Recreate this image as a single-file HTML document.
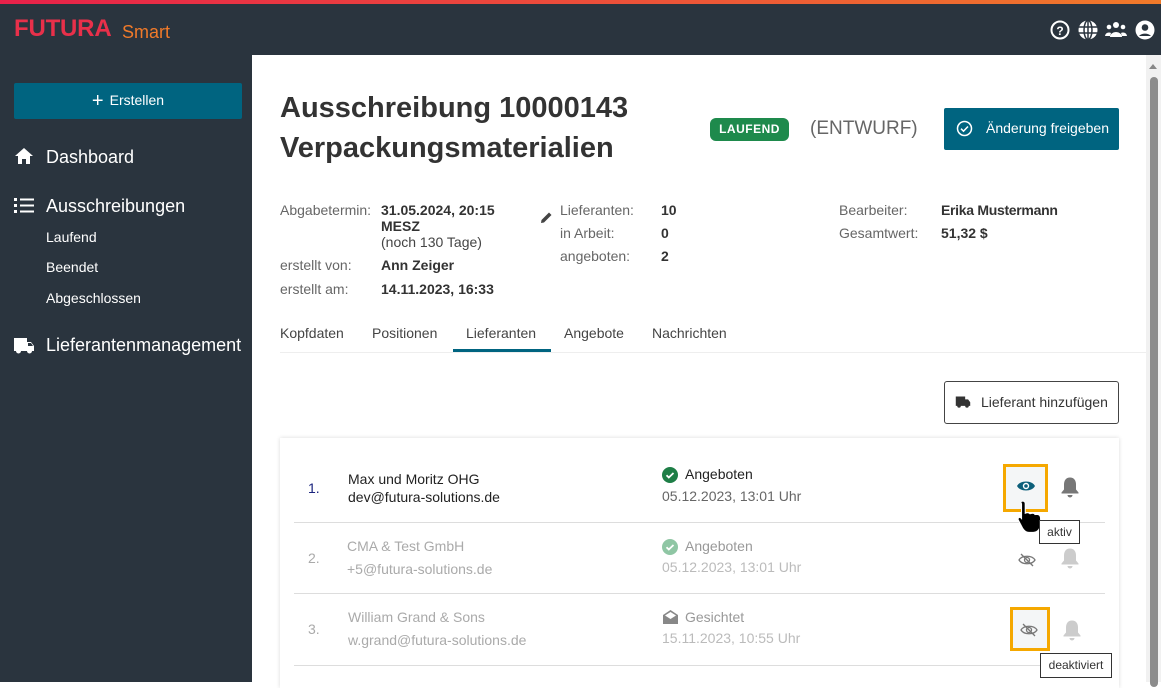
<!DOCTYPE html>
<html><head><meta charset="utf-8"><style>
*{box-sizing:border-box;margin:0;padding:0}
body{width:1161px;height:682px;overflow:hidden;font-family:"Liberation Sans",sans-serif;background:#fff;position:relative;color:#333}
.abs{position:absolute}
.top{left:0;top:0;width:1161px;height:55px;background:#2a343e}
.grad{left:0;top:0;width:1161px;height:4px;background:linear-gradient(90deg,#e8214a,#f07a2a)}
.side{left:0;top:55px;width:252px;height:627px;background:#2a343e}
.w{color:#fff}
.lbl{color:#666;font-size:14px}
.val{color:#333;font-size:14px;font-weight:bold}
.g{color:#aaa}
.sep{left:294px;width:811px;height:1px;background:#ddd}
</style></head><body>
<div class="abs top"></div><div class="abs grad"></div>
<div class="abs" style="left:14px;top:15px;font-size:24px;font-weight:bold;color:#e8304a;letter-spacing:-0.2px">FUTURA</div>
<div class="abs" style="left:122px;top:22px;font-size:18px;color:#f07a2a">Smart</div>
<svg class="abs" style="left:1050px;top:20px" width="110" height="22" viewBox="0 0 110 22">
<circle cx="10" cy="10" r="8.5" fill="none" stroke="#fff" stroke-width="2"/><text x="10" y="15" font-size="12" font-weight="bold" fill="#fff" text-anchor="middle" font-family="Liberation Sans">?</text>
<circle cx="38" cy="10" r="9.5" fill="#fff"/><path d="M28.5 7h19M28.5 13h19M38 .5v19" stroke="#2a343e" stroke-width="1.5"/><ellipse cx="38" cy="10" rx="4" ry="9.5" fill="none" stroke="#2a343e" stroke-width="1.5"/>
<circle cx="66" cy="5" r="3" fill="#fff"/><circle cx="59" cy="7" r="2.3" fill="#fff"/><circle cx="73" cy="7" r="2.3" fill="#fff"/><path d="M60 17a6 5 0 0 1 12 0zM55 16a4 4 0 0 1 6-3l-1 3zM77 16a4 4 0 0 0-6-3l1 3z" fill="#fff"/>
<circle cx="95" cy="10" r="9.5" fill="#fff"/><circle cx="95" cy="7.5" r="3.3" fill="#2a343e"/><path d="M89 16a7 5 0 0 1 12 0" fill="#2a343e"/>
</svg>
<div class="abs side"></div>
<div class="abs" style="left:14px;top:83px;width:228px;height:36px;background:#006480;border-radius:2px;color:#fff;font-size:14px;text-align:center;line-height:34px"><span style="font-size:20px;vertical-align:-2px;margin-right:6px">+</span>Erstellen</div>
<svg class="abs" style="left:14px;top:147px" width="20" height="18" viewBox="0 0 20 18"><path d="M10 1L1 9h3v8h4v-5h4v5h4V9h3z" fill="#fff"/></svg>
<div class="abs w" style="left:46px;top:147px;font-size:18px">Dashboard</div>
<svg class="abs" style="left:14px;top:197px" width="20" height="18" viewBox="0 0 20 18"><g fill="#fff"><rect x="0" y="1" width="3" height="3"/><rect x="0" y="7" width="3" height="3"/><rect x="0" y="13" width="3" height="3"/><rect x="6" y="1.5" width="14" height="2"/><rect x="6" y="7.5" width="14" height="2"/><rect x="6" y="13.5" width="14" height="2"/></g></svg>
<div class="abs w" style="left:46px;top:196px;font-size:18px">Ausschreibungen</div>
<div class="abs w" style="left:46px;top:229px;font-size:14px">Laufend</div>
<div class="abs w" style="left:46px;top:259px;font-size:14px">Beendet</div>
<div class="abs w" style="left:46px;top:290px;font-size:14px">Abgeschlossen</div>
<svg class="abs" style="left:13px;top:336px" width="22" height="18" viewBox="0 0 22 18"><path d="M1 2h13v4h4l3 4v5h-2a2.5 2.5 0 0 1-5 0H8a2.5 2.5 0 0 1-5 0H1z" fill="#fff"/><path d="M15 7h3l2 3h-5z" fill="#2a343e"/></svg>
<div class="abs w" style="left:46px;top:335px;font-size:18px">Lieferantenmanagement</div>
<div class="abs" style="left:1146px;top:55px;width:15px;height:627px;background:#f1f1f1"></div>
<div class="abs" style="left:1149px;top:64px;width:0;height:0;border-left:4px solid transparent;border-right:4px solid transparent;border-bottom:5px solid #888"></div>
<div class="abs" style="left:1150px;top:77px;width:8px;height:610px;background:#8c8c8c;border-radius:4px"></div>
<div class="abs" style="left:280px;top:88px;font-size:29px;font-weight:bold;color:#333;line-height:40px">Ausschreibung 10000143<br>Verpackungsmaterialien</div>
<div class="abs" style="left:710px;top:118px;width:79px;height:23px;background:#1e8a4c;border-radius:6px;color:#fff;font-size:12px;font-weight:bold;text-align:center;line-height:23px;letter-spacing:0.5px">LAUFEND</div>
<div class="abs" style="left:810px;top:118px;font-size:19px;color:#666">(ENTWURF)</div>
<div class="abs" style="left:944px;top:108px;width:175px;height:42px;background:#006480;border-radius:2px;color:#fff;font-size:14px;line-height:40px;padding-left:42px">Änderung freigeben</div>
<svg class="abs" style="left:956px;top:120px" width="17" height="17" viewBox="0 0 17 17"><circle cx="8.5" cy="8.5" r="7" fill="none" stroke="#fff" stroke-width="1.5"/><path d="M5 8.7l2.5 2.5L12 6.5" fill="none" stroke="#fff" stroke-width="1.5"/></svg>
<div class="abs lbl" style="left:280px;top:202px">Abgabetermin:</div>
<div class="abs val" style="left:381px;top:202px;line-height:16px">31.05.2024, 20:15<br>MESZ<br><span style="font-weight:normal;color:#444">(noch 130 Tage)</span></div>
<div class="abs lbl" style="left:280px;top:257px">erstellt von:</div><div class="abs val" style="left:381px;top:257px">Ann Zeiger</div>
<div class="abs lbl" style="left:280px;top:281px">erstellt am:</div><div class="abs val" style="left:381px;top:281px">14.11.2023, 16:33</div>
<svg class="abs" style="left:540px;top:211px" width="13" height="13" viewBox="0 0 13 13"><path d="M1 12l.5-3L9 1.5l2.5 2.5L4 11.5z" fill="#444"/></svg>
<div class="abs lbl" style="left:560px;top:202px">Lieferanten:</div><div class="abs val" style="left:661px;top:202px">10</div>
<div class="abs lbl" style="left:560px;top:225px">in Arbeit:</div><div class="abs val" style="left:661px;top:225px">0</div>
<div class="abs lbl" style="left:560px;top:248px">angeboten:</div><div class="abs val" style="left:661px;top:248px">2</div>
<div class="abs lbl" style="left:839px;top:202px">Bearbeiter:</div><div class="abs val" style="left:941px;top:202px;letter-spacing:-0.3px">Erika Mustermann</div>
<div class="abs lbl" style="left:839px;top:225px">Gesamtwert:</div><div class="abs val" style="left:941px;top:225px">51,32 $</div>
<div class="abs" style="left:280px;top:325px;font-size:14px;color:#444">Kopfdaten</div>
<div class="abs" style="left:372px;top:325px;font-size:14px;color:#444">Positionen</div>
<div class="abs" style="left:466px;top:325px;font-size:14px;color:#444">Lieferanten</div>
<div class="abs" style="left:564px;top:325px;font-size:14px;color:#444">Angebote</div>
<div class="abs" style="left:652px;top:325px;font-size:14px;color:#444">Nachrichten</div>
<div class="abs" style="left:453px;top:349px;width:98px;height:3px;background:#006480"></div>
<div class="abs" style="left:280px;top:352px;width:866px;height:1px;background:#eee"></div>
<div class="abs" style="left:944px;top:381px;width:175px;height:43px;border:1px solid #444;border-radius:3px;font-size:14px;color:#333;line-height:41px;padding-left:36px">Lieferant hinzufügen</div>
<svg class="abs" style="left:955px;top:395px" width="16" height="13" viewBox="0 0 22 18"><path d="M1 2h13v4h4l3 4v5h-2a2.5 2.5 0 0 1-5 0H8a2.5 2.5 0 0 1-5 0H1z" fill="#333"/></svg>
<div class="abs" style="left:280px;top:438px;width:839px;height:250px;background:#fff;box-shadow:0 0 4px rgba(0,0,0,.15)"></div>
<div class="abs sep" style="top:522px"></div>
<div class="abs sep" style="top:593px"></div>
<div class="abs sep" style="top:665px"></div>
<div class="abs" style="left:308px;top:480px;font-size:14px;color:#1a237e">1.</div>
<div class="abs" style="left:348px;top:470px;font-size:14px;color:#222;line-height:18px">Max und Moritz OHG<br>dev@futura-solutions.de</div>
<svg class="abs" style="left:662px;top:467px" width="16" height="16"><circle cx="8" cy="8" r="8" fill="#1e7e46"/><path d="M4.5 8.2l2.3 2.3L11.5 6" fill="none" stroke="#fff" stroke-width="1.8"/></svg>
<div class="abs" style="left:685px;top:466px;font-size:14px;color:#222">Angeboten</div>
<div class="abs" style="left:662px;top:488px;font-size:14px;color:#666">05.12.2023, 13:01 Uhr</div>
<div class="abs" style="left:1003px;top:464px;width:45px;height:48px;border:3px solid #f5a800;background:#f4f6f7"></div>
<svg class="abs" style="left:1016px;top:479px" width="20" height="14" viewBox="0 0 20 14"><path d="M1 7C4 1 16 1 19 7C16 13 4 13 1 7z" fill="#0c5f7a"/><circle cx="10" cy="7" r="3.2" fill="#fff"/><circle cx="10" cy="7" r="1.8" fill="#0c5f7a"/></svg>
<svg class="abs" style="left:1060px;top:476px" width="20" height="22" viewBox="0 0 20 22"><path d="M10 1.5c-4 0-6 3-6 7v5l-2.5 3v1h17v-1L16 13.5v-5c0-4-2-7-6-7z" fill="#777"/><path d="M7.5 19a2.5 2.5 0 0 0 5 0z" fill="#777"/></svg>
<svg class="abs" style="left:1016px;top:499px" width="28" height="36" viewBox="0 0 26 34"><path d="M6 2c1.5 0 2.5 1 2.5 2.5v9l1.5-.5c1.5-.3 2.5.3 3 1l2-.5c1.4-.2 2.3.4 2.8 1.2l1.5-.2c2.5 0 3.7 1.5 3.7 4v5c0 4-2.5 8-7 8h-4c-3 0-4.5-1.5-6-4L2 20c-.8-1.5.5-3.3 2-2.5l1 1V4.5C4 3 4.5 2 6 2z" fill="#000" stroke="#fff" stroke-width="1"/></svg>
<div class="abs" style="left:1039px;top:520px;width:41px;height:24px;border:1px solid #333;background:#fff;font-size:12px;color:#333;text-align:center;line-height:22px">aktiv</div>
<div class="abs g" style="left:308px;top:550px;font-size:14px">2.</div>
<div class="abs g" style="left:347px;top:535px;font-size:14px;line-height:23px">CMA &amp; Test GmbH<br>+5@futura-solutions.de</div>
<svg class="abs" style="left:662px;top:539px" width="16" height="16"><circle cx="8" cy="8" r="8" fill="#8fc6a4"/><path d="M4.5 8.2l2.3 2.3L11.5 6" fill="none" stroke="#fff" stroke-width="1.8"/></svg>
<div class="abs" style="left:685px;top:538px;font-size:14px;color:#999">Angeboten</div>
<div class="abs g" style="left:662px;top:559px;font-size:14px;color:#bbb">05.12.2023, 13:01 Uhr</div>
<svg class="abs" style="left:1018px;top:553px" width="18" height="14" viewBox="0 0 18 14"><path d="M1 7C4 2 14 2 17 7C14 12 4 12 1 7z" fill="none" stroke="#777" stroke-width="1.3"/><circle cx="9" cy="7" r="2.5" fill="none" stroke="#777" stroke-width="1.3"/><path d="M3 1l12 12" stroke="#777" stroke-width="1.3"/></svg>
<svg class="abs" style="left:1060px;top:547px" width="20" height="22" viewBox="0 0 20 22"><path d="M10 1.5c-4 0-6 3-6 7v5l-2.5 3v1h17v-1L16 13.5v-5c0-4-2-7-6-7z" fill="#ccc"/><path d="M7.5 19a2.5 2.5 0 0 0 5 0z" fill="#ccc"/></svg>
<div class="abs g" style="left:308px;top:621px;font-size:14px">3.</div>
<div class="abs g" style="left:348px;top:606px;font-size:14px;line-height:23px">William Grand &amp; Sons<br>w.grand@futura-solutions.de</div>
<svg class="abs" style="left:662px;top:609px" width="17" height="16" viewBox="0 0 17 16"><path d="M1 6L8.5 1 16 6v9H1z" fill="#888"/><path d="M3 6.5L8.5 3 14 6.5 8.5 10z" fill="#fff"/></svg>
<div class="abs" style="left:685px;top:609px;font-size:14px;color:#999">Gesichtet</div>
<div class="abs" style="left:662px;top:630px;font-size:14px;color:#bbb">15.11.2023, 10:55 Uhr</div>
<div class="abs" style="left:1010px;top:607px;width:40px;height:44px;border:3px solid #f5a800;background:#f4f6f7"></div>
<svg class="abs" style="left:1020px;top:623px" width="18" height="14" viewBox="0 0 18 14"><path d="M1 7C4 2 14 2 17 7C14 12 4 12 1 7z" fill="none" stroke="#777" stroke-width="1.3"/><circle cx="9" cy="7" r="2.5" fill="none" stroke="#777" stroke-width="1.3"/><path d="M3 1l12 12" stroke="#777" stroke-width="1.3"/></svg>
<svg class="abs" style="left:1062px;top:619px" width="20" height="22" viewBox="0 0 20 22"><path d="M10 1.5c-4 0-6 3-6 7v5l-2.5 3v1h17v-1L16 13.5v-5c0-4-2-7-6-7z" fill="#ccc"/><path d="M7.5 19a2.5 2.5 0 0 0 5 0z" fill="#ccc"/></svg>
<div class="abs" style="left:1040px;top:653px;width:72px;height:25px;border:1px solid #333;background:#fff;font-size:12px;color:#333;text-align:center;line-height:23px">deaktiviert</div>
</body></html>
